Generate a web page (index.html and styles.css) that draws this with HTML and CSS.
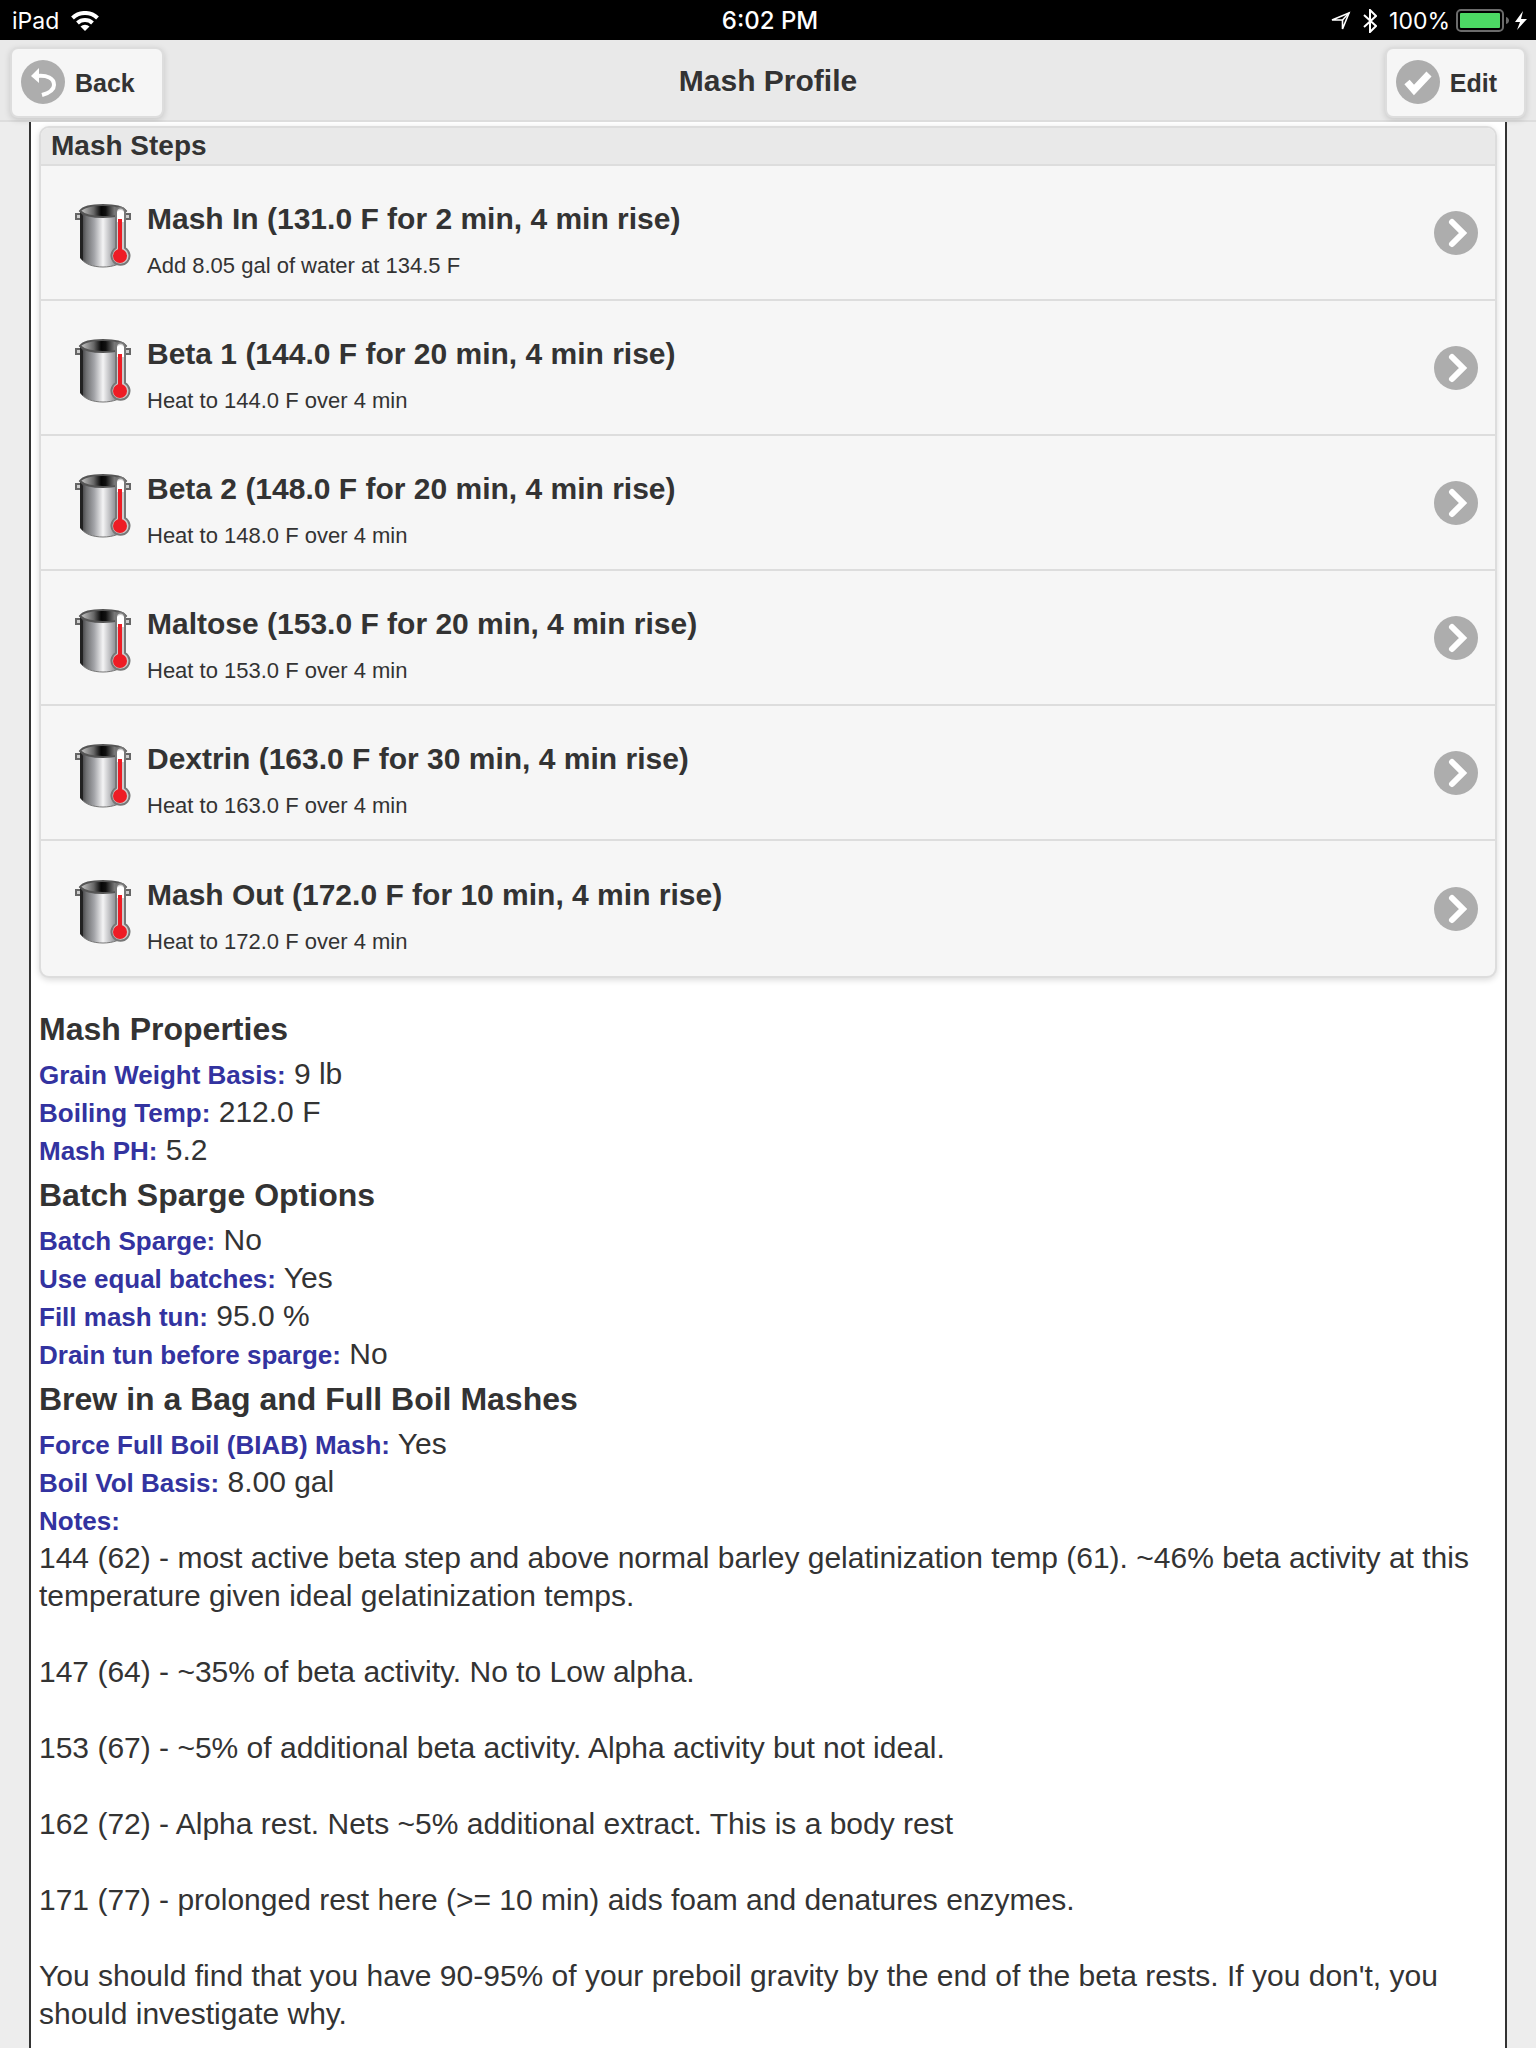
FILE: index.html
```html
<!DOCTYPE html>
<html lang="en">

<head>
    <meta charset="UTF-8">
    <meta name="viewport" content="width=device-width, initial-scale=1.0">
    <title>Mash Profile</title>
    <link rel="stylesheet" href="styles.css">
</head>

<body>
    <!-- Shared icons -->
    <svg class="icon-defs" width="0" height="0" aria-hidden="true">
        <defs>
            <linearGradient id="steel" x1="0" x2="1" y1="0" y2="0">
                <stop offset="0" stop-color="#3a3a3c" />
                <stop offset="0.12" stop-color="#6f7072" />
                <stop offset="0.3" stop-color="#a3a4a8" />
                <stop offset="0.5" stop-color="#f4f4f5" />
                <stop offset="0.75" stop-color="#9b9ca0" />
                <stop offset="1" stop-color="#5a5a5d" />
            </linearGradient>
            <linearGradient id="inside" x1="0" x2="1" y1="0" y2="0">
                <stop offset="0" stop-color="#d0d0d0" />
                <stop offset="0.3" stop-color="#666" />
                <stop offset="0.46" stop-color="#050505" />
                <stop offset="0.56" stop-color="#111" />
                <stop offset="0.75" stop-color="#777" />
                <stop offset="1" stop-color="#555" />
            </linearGradient>
        </defs>
        <symbol id="pot" viewBox="0 0 56 64">
            <path d="M6 10H1v5h5M50 10h5v5h-5" fill="#ccc" stroke="#666" stroke-width="2" />
            <path d="M6 7v47c3 6 12 9 22 9s19-3 22-9V7z" fill="url(#steel)" stroke="#777" stroke-width="1" />
            <path d="M5 7v47l3 3V12z" fill="#222" />
            <path d="M5 7C8 3 17 1 28 1s20 2 23 6c-3 4-12 6-23 6S9 11 5 7z" fill="url(#inside)" stroke="#555" stroke-width="2" />
            <path d="M41 44V8a4 4 0 0 1 9 0v36a9 9 0 1 1-9 0z" fill="#ccc" stroke="#777" stroke-width="2" />
            <path d="M42 8a4 4 0 0 1 7 0v10h-7z" fill="#fff" />
            <path d="M45 15v34" stroke="#ee1c25" stroke-width="4" />
            <circle cx="45" cy="52" r="7" fill="#ee1c25" />
        </symbol>
        <symbol id="arrow" viewBox="0 0 44 44">
            <circle cx="22" cy="22" r="22" fill="#adadad" />
            <path d="M18 11l11 11-11 11" fill="none" stroke="#fff" stroke-width="6" stroke-linecap="round" />
        </symbol>
    </svg>

    <!-- Status Bar -->
    <div class="status-bar">
        <div class="status-left">
            <span>iPad</span>
            <svg width="28" height="20" viewBox="0 0 28 20" fill="none" stroke="#fff">
                <path d="M1.500 7a18 18 0 0 1 25 0" stroke-width="4" />
                <path d="M6.500 12a11 11 0 0 1 15 0" stroke-width="4" />
                <path d="M14 20l-4.500-4.500a6.500 6.500 0 0 1 9 0z" fill="#fff" stroke="none" />
            </svg>
        </div>
        <span class="time">6:02 PM</span>
        <div class="status-right">
            <svg width="20" height="20" viewBox="0 0 20 20">
                <path d="M1 9L18 2l-6.500 16V9z" fill="none" stroke="#fff" stroke-width="1.600" />
                <path d="M18 2l-6.500 7" stroke="#fff" stroke-width="1.600" />
            </svg>
            <svg width="14" height="24" viewBox="0 0 14 24">
                <path d="M1 6l12 11-6 6V1l6 6L1 18" fill="none" stroke="#fff" stroke-width="2" />
            </svg>
            <span>100%</span>
            <svg class="battery" width="72" height="24" viewBox="0 0 72 24">
                <rect x="1" y="1" width="46" height="21" rx="4" fill="none" stroke="#6b6b6b" stroke-width="2" />
                <rect x="4" y="4" width="40" height="15" rx="1" fill="#4cd964" />
                <path d="M50 8c4 1 4 6 0 7z" fill="#6b6b6b" />
                <path d="M67 2l-8 11h5l-3 8 10-11h-6z" fill="#fff" />
            </svg>
        </div>
    </div>

    <!-- Header -->
    <header class="header">
        <button type="button" class="btn">
            <svg width="44" height="44" viewBox="0 0 44 44">
                <circle cx="22" cy="22" r="22" fill="#adadad" />
                <path d="M16 16c10-1 17 2 17 9 0 5-5 8-12 10" fill="none" stroke="#fff" stroke-width="4" />
                <path d="M10 16l8-8v15z" fill="#fff" />
            </svg>
            <span>Back</span>
        </button>
        <h1 class="title">Mash Profile</h1>
        <button type="button" class="btn btn-edit">
            <svg width="44" height="44" viewBox="0 0 44 44">
                <circle cx="22" cy="22" r="22" fill="#adadad" />
                <path d="M11 22l7 8 15-16" fill="none" stroke="#fff" stroke-width="7" />
            </svg>
            <span>Edit</span>
        </button>
    </header>

    <main class="content">
        <!-- Mash Steps -->
        <section class="steps">
            <h2 class="steps-title">Mash Steps</h2>
            <ul class="step-list">
                <li>
                    <a href="#mash-in" class="step">
                        <svg class="pot" width="56" height="64"><use href="#pot" /></svg>
                        <div class="step-text">
                            <h3>Mash In (131.0 F for 2 min, 4 min rise)</h3>
                            <p>Add 8.05 gal of water at 134.5 F</p>
                        </div>
                        <svg width="44" height="44"><use href="#arrow" /></svg>
                    </a>
                </li>
                <li>
                    <a href="#beta-1" class="step">
                        <svg class="pot" width="56" height="64"><use href="#pot" /></svg>
                        <div class="step-text">
                            <h3>Beta 1 (144.0 F for 20 min, 4 min rise)</h3>
                            <p>Heat to 144.0 F over 4 min</p>
                        </div>
                        <svg width="44" height="44"><use href="#arrow" /></svg>
                    </a>
                </li>
                <li>
                    <a href="#beta-2" class="step">
                        <svg class="pot" width="56" height="64"><use href="#pot" /></svg>
                        <div class="step-text">
                            <h3>Beta 2 (148.0 F for 20 min, 4 min rise)</h3>
                            <p>Heat to 148.0 F over 4 min</p>
                        </div>
                        <svg width="44" height="44"><use href="#arrow" /></svg>
                    </a>
                </li>
                <li>
                    <a href="#maltose" class="step">
                        <svg class="pot" width="56" height="64"><use href="#pot" /></svg>
                        <div class="step-text">
                            <h3>Maltose (153.0 F for 20 min, 4 min rise)</h3>
                            <p>Heat to 153.0 F over 4 min</p>
                        </div>
                        <svg width="44" height="44"><use href="#arrow" /></svg>
                    </a>
                </li>
                <li>
                    <a href="#dextrin" class="step">
                        <svg class="pot" width="56" height="64"><use href="#pot" /></svg>
                        <div class="step-text">
                            <h3>Dextrin (163.0 F for 30 min, 4 min rise)</h3>
                            <p>Heat to 163.0 F over 4 min</p>
                        </div>
                        <svg width="44" height="44"><use href="#arrow" /></svg>
                    </a>
                </li>
                <li>
                    <a href="#mash-out" class="step">
                        <svg class="pot" width="56" height="64"><use href="#pot" /></svg>
                        <div class="step-text">
                            <h3>Mash Out (172.0 F for 10 min, 4 min rise)</h3>
                            <p>Heat to 172.0 F over 4 min</p>
                        </div>
                        <svg width="44" height="44"><use href="#arrow" /></svg>
                    </a>
                </li>
            </ul>
        </section>

        <!-- Properties -->
        <section class="properties">
            <h2>Mash Properties</h2>
            <p><b>Grain Weight Basis:</b> 9 lb</p>
            <p><b>Boiling Temp:</b> 212.0 F</p>
            <p><b>Mash PH:</b> 5.2</p>

            <h2>Batch Sparge Options</h2>
            <p><b>Batch Sparge:</b> No</p>
            <p><b>Use equal batches:</b> Yes</p>
            <p><b>Fill mash tun:</b> 95.0 %</p>
            <p><b>Drain tun before sparge:</b> No</p>

            <h2>Brew in a Bag and Full Boil Mashes</h2>
            <p><b>Force Full Boil (BIAB) Mash:</b> Yes</p>
            <p><b>Boil Vol Basis:</b> 8.00 gal</p>
            <p><b>Notes:</b></p>
        </section>

        <!-- Notes -->
        <section class="notes">
            <p>144 (62) - most active beta step and above normal barley gelatinization temp (61). ~46% beta activity at this temperature given ideal gelatinization temps.</p>
            <p>147 (64) - ~35% of beta activity. No to Low alpha.</p>
            <p>153 (67) - ~5% of additional beta activity. Alpha activity but not ideal.</p>
            <p>162 (72) - Alpha rest. Nets ~5% additional extract. This is a body rest</p>
            <p>171 (77) - prolonged rest here (&gt;= 10 min) aids foam and denatures enzymes.</p>
            <p>You should find that you have 90-95% of your preboil gravity by the end of the beta rests. If you don't, you should investigate why.</p>
        </section>
    </main>
</body>

</html>
```
FILE: styles.css
```css
* {
    box-sizing: border-box;
}

body {
    margin: 0;
    min-height: 100vh;
    display: flex;
    flex-direction: column;
    background-color: #ededed;
    color: #333;
    font-family: "Liberation Sans", Arial, sans-serif;
    font-size: 30px;
    line-height: 38px;
}

h1, h2, h3, p {
    margin: 0;
}

svg {
    flex-shrink: 0;
}

.icon-defs {
    position: absolute;
}

/* Status Bar */
.status-bar {
    display: grid;
    grid-template-columns: 1fr auto 1fr;
    align-items: center;
    height: 40px;
    padding: 2px 8px 0 12px;
    background-color: #000;
    color: #fff;
    font-family: Inter, sans-serif;
    font-size: 23px;
}

.status-left,
.status-right {
    display: flex;
    align-items: center;
    gap: 12px;
}

.status-right {
    justify-content: flex-end;
}

.battery {
    margin-left: -6px;
}

.time {
    font-weight: 500;
    font-size: 24px;
}

/* Header */
.header {
    display: grid;
    grid-template-columns: 1fr auto 1fr;
    align-items: center;
    height: 82px;
    padding: 0 10px;
    background-color: #e9e9e9;
    border-bottom: 2px solid #ddd;
}

.title {
    padding-top: 2px;
    font-size: 30px;
    text-shadow: 0 2px 0 #eee;
}

.btn {
    display: flex;
    align-items: center;
    justify-self: start;
    gap: 10px;
    height: 71px;
    margin-top: 4px;
    padding: 0 27px 0 9px;
    border: 2px solid #ddd;
    border-radius: 8px;
    background-color: #f6f6f6;
    box-shadow: 0 2px 6px rgba(0, 0, 0, 0.15);
    color: #333;
    font-family: inherit;
    font-size: 25px;
    font-weight: bold;
    text-shadow: 0 2px 0 #f3f3f3;
    cursor: pointer;
}

.btn span {
    padding-top: 2px;
}

.btn-edit {
    justify-self: end;
}

/* Content */
.content {
    flex: 1;
    margin: 0 29px;
    padding: 4px 8px 16px;
    border: 2px solid #333;
    border-width: 0 2px;
    background-color: #fff;
}

/* Mash Steps */
.steps {
    border: 2px solid #ddd;
    border-radius: 10px;
    background-color: #f6f6f6;
    box-shadow: 0 2px 6px rgba(0, 0, 0, 0.15);
    overflow: hidden;
}

.steps-title {
    padding: 0 10px;
    border-bottom: 2px solid #ddd;
    background-color: #e9e9e9;
    font-size: 28px;
    line-height: 36px;
}

.step-list {
    margin: 0;
    padding: 0;
    list-style: none;
}

.step {
    display: flex;
    align-items: center;
    gap: 16px;
    height: 135px;
    padding: 0 17px 0 34px;
    border-bottom: 2px solid #ddd;
    color: #333;
    text-decoration: none;
}

.step-list li:last-child .step {
    border-bottom: none;
}

.step:hover {
    background-color: #ededed;
}

.pot {
    margin-top: 6px;
}

.step-text {
    flex: 1;
    padding-top: 14px;
}

.step-text h3 {
    font-size: 30px;
    margin-bottom: 14px;
}

.step-text p {
    font-size: 22px;
    line-height: 28px;
}

/* Properties */
.properties {
    margin-top: 25px;
}

.properties h2 {
    padding: 5px 0;
    font-size: 32px;
    line-height: 42px;
}

.properties b {
    color: #3333a0;
    font-size: 26px;
    line-height: 26px;
}

/* Notes */
.notes p {
    margin-bottom: 38px;
}

.notes p:last-child {
    margin-bottom: 0;
}
```
